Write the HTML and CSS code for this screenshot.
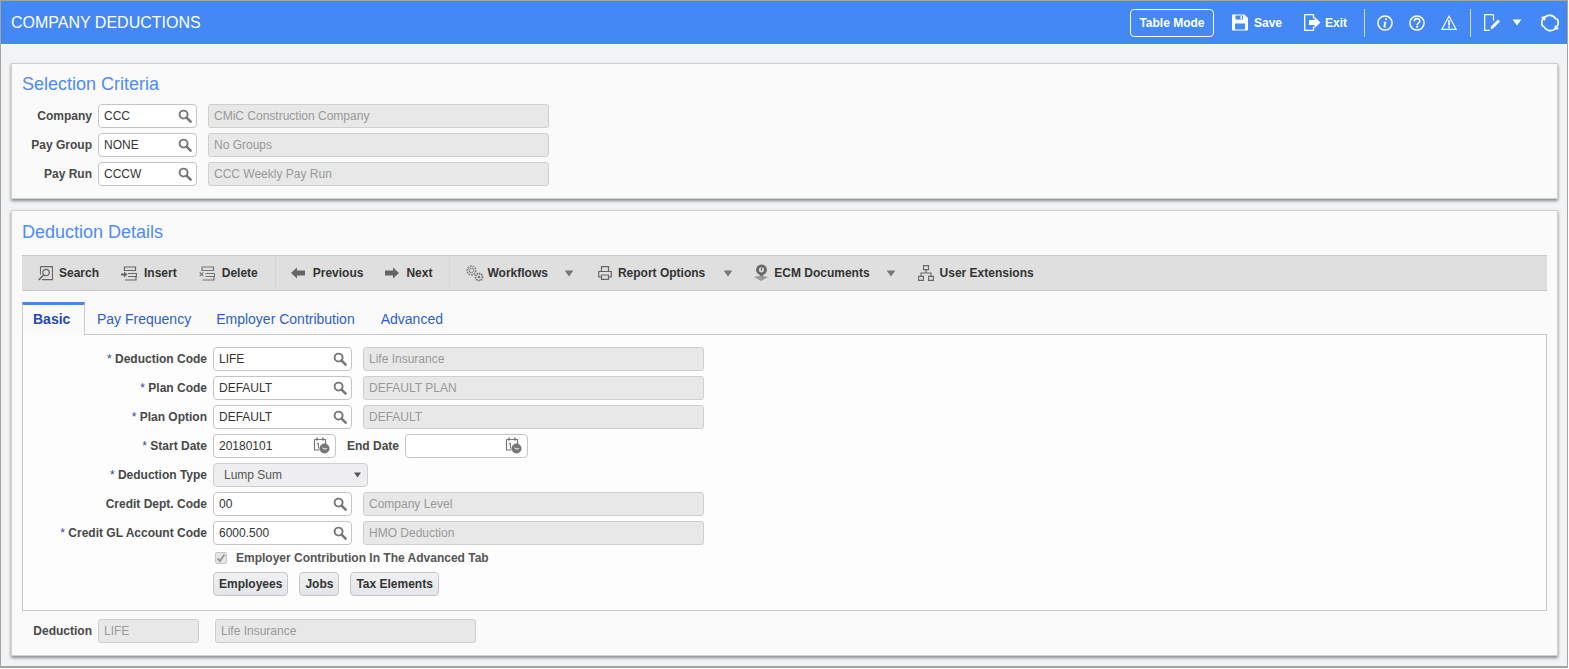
FILE: index.html
```html
<!DOCTYPE html>
<html lang="en">
<head>
<meta charset="utf-8">
<title>Company Deductions</title>
<link rel="stylesheet" href="styles.css">
</head>
<body>
<svg class="defs" width="0" height="0" aria-hidden="true">
  <symbol id="i-lens" viewBox="0 0 14 14"><circle cx="5.6" cy="5.6" r="4" fill="none" stroke="currentColor" stroke-width="1.9"/><path d="M8.6 8.6l4 4" stroke="currentColor" stroke-width="2.6" stroke-linecap="round"/></symbol>
  <symbol id="i-cal" viewBox="0 0 17 17"><path d="M1.5 2.5h11v4.5M1.5 2.5v10.5h5" fill="none" stroke="#777" stroke-width="1.2"/><path d="M4 .5v3M10 .5v3" stroke="#777" stroke-width="1.6"/><path d="M4 6.5h1.4v5" fill="none" stroke="#777" stroke-width="1.1"/><circle cx="11.5" cy="11.5" r="5" fill="#777"/><path d="M9.5 10.8l2.2 1.3 2.2-.6" fill="none" stroke="#fff" stroke-width="1"/></symbol>
  <symbol id="i-caret" viewBox="0 0 10 8"><path d="M0 .5h10L5 7.5z" fill="currentColor"/></symbol>
</svg>
<div class="window">
  <header class="topbar">
    <h1 class="app-title">COMPANY DEDUCTIONS</h1>
    <div class="top-actions">
      <button class="table-mode" type="button">Table Mode</button>
      <span class="top-item save">
        <svg width="16" height="17" viewBox="0 0 16 17"><path d="M0 1.500A1 1 0 0 1 1 .5h11.500L16 4v11.500a1 1 0 0 1-1 1H1a1 1 0 0 1-1-1z" fill="#fff"/><path d="M3.500 1.500h7.500v4H3.500z" fill="#4388f5"/><path d="M8.500 2h1.500v3H8.500z" fill="#fff"/><path d="M3 9.500h10v6H3z" fill="#4388f5"/></svg>
        Save
      </span>
      <span class="top-item exit">
        <svg width="17" height="17" viewBox="0 0 17 17"><path d="M9.500 4.500V.7H.7v15.600h8.800v-3.800" fill="none" stroke="#fff" stroke-width="1.300"/><path d="M5 6h5.500V2.800L16.500 8.500l-6 5.700V11H5z" fill="#fff"/></svg>
        Exit
      </span>
      <span class="top-sep first"></span>
      <svg class="top-icon info" width="16" height="16" viewBox="0 0 16 16"><circle cx="8" cy="8" r="7.100" fill="none" stroke="#fff" stroke-width="1.500"/><path d="M8.300 3.200h1.800l-.3 1.700H8zM6.400 6.700h3l-1.200 5 1.100-.2-.2.900H6.200l1.200-5.300-1.200.2z" fill="#fff"/></svg>
      <svg class="top-icon help" width="16" height="16" viewBox="0 0 16 16"><circle cx="8" cy="8" r="7.100" fill="none" stroke="#fff" stroke-width="1.500"/><path d="M5.300 6.200c0-3.400 5.500-3.400 5.500-.1 0 2.100-2.600 2-2.600 3.800" fill="none" stroke="#fff" stroke-width="1.600"/><path d="M7.200 10.800h2v1.900h-2z" fill="#fff"/></svg>
      <svg class="top-icon warn" width="16" height="15" viewBox="0 0 16 15"><path d="M8 1.300L.9 14.300h14.200z" fill="none" stroke="#fff" stroke-width="1.200"/><path d="M7.200 5h1.600v5.500H7.200zM7.200 11.300h1.600v1.600H7.200z" fill="#fff"/></svg>
      <span class="top-sep second"></span>
      <svg class="top-icon edit" width="16" height="17" viewBox="0 0 16 17"><path d="M9.500.7H.7v15.600h5" fill="none" stroke="#fff" stroke-width="1.200"/><path d="M9.500.7v6" stroke="#fff" stroke-width="1.200"/><path d="M6.500 15.500l.8-3.300L14 5.500l2 2-6.700 6.700z" fill="#fff"/></svg>
      <svg class="top-caret" width="10" height="7"><use href="#i-caret"/></svg>
      <svg class="top-icon refresh" width="18" height="18" viewBox="0 0 18 18"><path d="M15 5.500A7 7 0 0 0 3.500 3.500M3 12.500A7 7 0 0 0 14.500 14.500" fill="none" stroke="#fff" stroke-width="1.700"/><path d="M2.300 4.500A7 7 0 0 0 2.300 13" fill="none" stroke="#fff" stroke-width="1.700"/><path d="M15.700 4.500A7 7 0 0 1 15.700 13" fill="none" stroke="#fff" stroke-width="1.700"/><path d="M0 3l5-1-1 5zM18 15l-5 1 1-5z" fill="#fff"/></svg>
    </div>
  </header>

  <main class="content">
    <section class="panel selection">
      <h2 class="panel-title">Selection Criteria</h2>
      <div class="row top-row">
        <label class="lbl narrow">Company</label>
        <div class="field narrow-f"><span>CCC</span><svg class="lens" width="14" height="14"><use href="#i-lens"/></svg></div>
        <div class="ro wide-s">CMiC Construction Company</div>
      </div>
      <div class="row top-row">
        <label class="lbl narrow">Pay Group</label>
        <div class="field narrow-f"><span>NONE</span><svg class="lens" width="14" height="14"><use href="#i-lens"/></svg></div>
        <div class="ro wide-s">No Groups</div>
      </div>
      <div class="row top-row">
        <label class="lbl narrow">Pay Run</label>
        <div class="field narrow-f"><span>CCCW</span><svg class="lens" width="14" height="14"><use href="#i-lens"/></svg></div>
        <div class="ro wide-s">CCC Weekly Pay Run</div>
      </div>
    </section>

    <section class="panel details">
      <h2 class="panel-title">Deduction Details</h2>
      <nav class="toolbar">
        <span class="tool first-tool">
          <svg width="15" height="15" viewBox="0 0 15 15"><path d="M2.500.6h12v13H4" fill="none" stroke="#666" stroke-width="1.100"/><path d="M2.500.6v8" stroke="#666" stroke-width="1.100"/><circle cx="8" cy="6.500" r="3.200" fill="none" stroke="#666" stroke-width="1.200"/><path d="M5.500 9L.8 14" stroke="#666" stroke-width="1.700"/></svg>
          Search
        </span>
        <span class="tool wide-gap">
          <svg width="16" height="15" viewBox="0 0 16 15"><path d="M3.500 1h11v3.500h-11zM4 4.500h10M7 7.500h8.500v3H7M4 14h11v-3.500" fill="none" stroke="#666" stroke-width="1.200"/><path d="M0 7.500h3V5.500l3.500 3-3.500 3v-2H0z" fill="#666"/></svg>
          Insert
        </span>
        <span class="tool wide-gap">
          <svg width="16" height="15" viewBox="0 0 16 15"><path d="M3 1h11.500v3.500H3zM6.500 7.500h9v3h-9M3.500 14H15v-3.500" fill="none" stroke="#777" stroke-width="1.200"/><path d="M.7 6.500l3.600 3.600M4.300 6.500L.7 10.100" stroke="#777" stroke-width="1.200"/></svg>
          Delete
        </span>
        <span class="tool-sep"></span>
        <span class="tool prev">
          <svg width="14" height="12" viewBox="0 0 14 12"><path d="M0 6l6-5.500V3.500h8v5H6v3z" fill="#666"/></svg>
          Previous
        </span>
        <span class="tool wide-gap">
          <svg width="14" height="12" viewBox="0 0 14 12"><path d="M14 6L8 .5V3.500H0v5h8v3z" fill="#666"/></svg>
          Next
        </span>
        <span class="tool-sep"></span>
        <span class="tool drop gears">
          <svg width="19" height="18" viewBox="0 0 19 18"><circle cx="6.500" cy="6.500" r="4.300" fill="none" stroke="#888" stroke-width="1.800" stroke-dasharray="1.700 .9"/><circle cx="6.500" cy="6.500" r="2.200" fill="none" stroke="#888"/><circle cx="14" cy="13" r="3.500" fill="none" stroke="#777" stroke-width="1.800" stroke-dasharray="1.500 .8"/><circle cx="14" cy="13" r="1.200" fill="#777"/></svg>
          Workflows
        </span>
        <svg class="tool-caret after-flow" width="10" height="7"><use href="#i-caret"/></svg>
        <span class="tool drop report">
          <svg width="14" height="14" viewBox="0 0 14 14"><path d="M3.500 5V.7h7V5M3.500 11H.7V5.500h12.600V11h-2.800" fill="none" stroke="#666" stroke-width="1.200"/><path d="M3.500 9h7v4.300h-7z" fill="none" stroke="#666" stroke-width="1.200"/></svg>
          Report Options
        </span>
        <svg class="tool-caret" width="10" height="7"><use href="#i-caret"/></svg>
        <span class="tool drop ecm">
          <svg width="16" height="18" viewBox="0 0 16 18"><circle cx="8.500" cy="5.800" r="5.400" fill="#666"/><circle cx="8.500" cy="5.800" r="2.600" fill="#ddd"/><path d="M8.500 3.800v3" stroke="#666" stroke-width="1.200"/><path d="M7 11h3v3H7z" fill="#666"/><path d="M1 13l7-1.500 7 1.500-7 4z" fill="#999"/></svg>
          ECM Documents
        </span>
        <svg class="tool-caret" width="10" height="7"><use href="#i-caret"/></svg>
        <span class="tool ext">
          <svg width="16" height="16" viewBox="0 0 16 16"><path d="M5.500.6h5v4h-5zM.6 11.400h4.800v4H.6zM10.600 11.400h4.800v4h-4.800zM8 4.600v3.400M3 11.400V8h10v3.400" fill="none" stroke="#666" stroke-width="1.100"/></svg>
          User Extensions
        </span>
      </nav>

      <div class="tabs">
        <span class="tab active">Basic</span>
        <span class="tab">Pay Frequency</span>
        <span class="tab employer">Employer Contribution</span>
        <span class="tab">Advanced</span>
      </div>

      <div class="tab-body">
        <div class="row d-row">
          <label class="lbl wide"><i>*</i> Deduction Code</label>
          <div class="field wide-f"><span>LIFE</span><svg class="lens" width="14" height="14"><use href="#i-lens"/></svg></div>
          <div class="ro wide-s">Life Insurance</div>
        </div>
        <div class="row d-row">
          <label class="lbl wide"><i>*</i> Plan Code</label>
          <div class="field wide-f"><span>DEFAULT</span><svg class="lens" width="14" height="14"><use href="#i-lens"/></svg></div>
          <div class="ro wide-s">DEFAULT PLAN</div>
        </div>
        <div class="row d-row">
          <label class="lbl wide"><i>*</i> Plan Option</label>
          <div class="field wide-f"><span>DEFAULT</span><svg class="lens" width="14" height="14"><use href="#i-lens"/></svg></div>
          <div class="ro wide-s">DEFAULT</div>
        </div>
        <div class="row d-row">
          <label class="lbl wide"><i>*</i> Start Date</label>
          <div class="field date-f"><span>20180101</span><svg class="cal" width="17" height="17"><use href="#i-cal"/></svg></div>
          <label class="lbl end-lbl">End Date</label>
          <div class="field date-f"><span></span><svg class="cal" width="17" height="17"><use href="#i-cal"/></svg></div>
        </div>
        <div class="row d-row">
          <label class="lbl wide"><i>*</i> Deduction Type</label>
          <div class="select"><span>Lump Sum</span><svg width="7" height="6"><use href="#i-caret"/></svg></div>
        </div>
        <div class="row d-row">
          <label class="lbl wide">Credit Dept. Code</label>
          <div class="field wide-f"><span>00</span><svg class="lens" width="14" height="14"><use href="#i-lens"/></svg></div>
          <div class="ro wide-s">Company Level</div>
        </div>
        <div class="row d-row">
          <label class="lbl wide"><i>*</i> Credit GL Account Code</label>
          <div class="field wide-f"><span>6000.500</span><svg class="lens" width="14" height="14"><use href="#i-lens"/></svg></div>
          <div class="ro wide-s">HMO Deduction</div>
        </div>
        <div class="check-row">
          <span class="check"><svg width="10" height="10" viewBox="0 0 10 10"><path d="M1.500 5.500l2.500 2.500 4.500-6.500" fill="none" stroke="#999" stroke-width="2"/></svg></span>
          <span class="check-text">Employer Contribution In The Advanced Tab</span>
        </div>
        <div class="btn-row">
          <button class="btn" type="button">Employees</button>
          <button class="btn" type="button">Jobs</button>
          <button class="btn" type="button">Tax Elements</button>
        </div>
      </div>

      <div class="row foot-row">
        <label class="lbl narrow">Deduction</label>
        <div class="ro foot-a">LIFE</div>
        <div class="ro foot-b">Life Insurance</div>
      </div>
    </section>
  </main>
</div>
</body>
</html>
```
FILE: styles.css
```css
* { box-sizing: border-box; }
html, body { margin: 0; padding: 0; height: 100%; background: #fff; overflow: hidden; }
body { font-family: "Liberation Sans", Arial, sans-serif; font-size: 12px; color: #333; }
.defs { position: absolute; }

.window { height: 668px; width: 1568px; border: 1px solid #a3a3a3; border-bottom-width: 2px; background: #f2f3f5; }

.topbar { height: 43px; background: #4388f5; color: #fff; display: flex; align-items: center; justify-content: space-between; padding-left: 10px; }
.app-title { margin: 0; font-size: 16px; font-weight: 400; }
.top-actions { display: flex; align-items: center; padding-right: 8px; }
.table-mode { width: 84px; height: 28px; border: 1px solid #fff; border-radius: 4px; background: transparent; color: #fff; font: bold 12px "Liberation Sans", Arial, sans-serif; padding: 0; }
.top-item { display: flex; align-items: center; font-weight: bold; }
.save { margin-left: 18px; gap: 6px; }
.exit { margin-left: 22px; gap: 4px; }
.top-sep { width: 1px; height: 28px; background: #c9dcfb; }
.top-sep.first { margin-left: 17px; }
.top-sep.second { margin-left: 13px; }
.info { margin-left: 12px; }
.help { margin-left: 16px; }
.warn { margin-left: 16px; }
.edit { margin-left: 13px; }
.top-caret { margin-left: 12px; color: #fff; }
.refresh { margin-left: 19px; }

.content { padding: 19px 9px 0 10px; display: flex; flex-direction: column; gap: 11px; }
.panel { background: #fafafa; border: 1px solid #cfcfcf; box-shadow: 0 2px 3px #8a8a8a; padding: 0 10px; width: 1547px; }
.panel.selection { height: 136px; }
.panel.details { height: 446px; }
.panel-title { margin: 0; height: 39px; padding-top: 10px; font-size: 18px; line-height: 20px; font-weight: 400; color: #4f8af5; }
.details .panel-title { padding-top: 11px; }

.row { display: flex; align-items: center; height: 25px; margin-bottom: 4px; }
.lbl { display: block; font-weight: bold; color: #484848; text-align: right; white-space: nowrap; }
.lbl i { font-style: normal; font-weight: 400; color: #3345a8; }
.narrow { width: 70px; margin-right: 6px; }
.wide { width: 184px; margin-right: 6px; }
.end-lbl { margin-left: 11px; margin-right: 6px; }

.field { height: 24px; align-self: flex-end; display: flex; align-items: center; justify-content: space-between; background: #fff; border: 1px solid #c4c4c4; border-radius: 4px; padding: 0 4px 1px 5px; color: #333; }
.narrow-f { width: 99px; }
.wide-f { width: 139px; }
.date-f { width: 123px; padding-right: 5px; }
.lens { color: #777; flex: none; }
.cal { flex: none; }
.ro { height: 24px; align-self: flex-end; display: flex; align-items: center; background: #e8e8e8; border: 1px solid #cfcfcf; border-radius: 3px; padding: 0 5px 1px; color: #999; }
.wide-s { width: 341px; margin-left: 11px; }

.toolbar { height: 36px; background: #dfdfdf; border-top: 1px solid #c6c6c6; border-bottom: 1px solid #c6c6c6; display: flex; align-items: center; margin-top: 5px; font-weight: bold; color: #333; padding-left: 5px; }
.tool { display: flex; align-items: center; gap: 6px; padding: 0 11px; white-space: nowrap; }
.tool.wide-gap { gap: 7px; }
.tool.prev { gap: 8px; }
.tool.gears { gap: 3px; }
.tool.ecm { gap: 5px; margin-left: -3px; }
.tool.drop { padding-right: 16px; }
.tool.report { padding-right: 18px; }
.tool-sep { width: 1px; height: 34px; background: #d6d6d6; margin: 0 4px 0 6px; }
.tool-caret { color: #777; margin-right: 12px; flex: none; }
.tool-caret.after-flow { margin-right: 13px; }
.ext { padding-left: 10px; }

.tabs { display: flex; height: 44px; padding-top: 11px; }
.tab { font-size: 14px; line-height: 34px; padding: 0 13px 0 12px; color: #2d5fc9; }
.tab.employer { padding-right: 14px; }
.tab.active { width: 63px; padding: 0 0 0 10px; font-weight: bold; color: #1f4bb0; background: #fafafa; border: 1px solid #c9ccd4; border-top: 3px solid #4388f5; border-bottom: 0; position: relative; z-index: 1; height: 33px; line-height: 29px; }

.tab-body { height: 277px; margin-top: -1px; background: #fdfdfd; border: 1px solid #c6c6c6; padding-top: 11px; }
.d-row { margin-bottom: 4px; }

.select { width: 155px; height: 24px; align-self: flex-end; display: flex; align-items: center; justify-content: space-between; background: #eeeef0; border: 1px solid #cfcfcf; border-radius: 4px; padding: 0 6px 1px 10px; color: #555; }
.select svg { color: #555; }

.check-row { display: flex; align-items: center; height: 18px; margin-top: 3px; padding-left: 192px; }
.check { width: 12px; height: 12px; display: flex; align-items: center; justify-content: center; background: #e4e4e4; border: 1px solid #c8c8c8; border-radius: 2px; }
.check-text { margin-left: 9px; font-weight: bold; color: #555; }

.btn-row { display: flex; gap: 11px; margin-top: 5px; padding-left: 190px; }
.btn { height: 24px; padding: 0 5px; background: linear-gradient(#f0f1f3, #e3e5e9); border: 1px solid #c4c6ca; border-radius: 4px; font: bold 12px "Liberation Sans", Arial, sans-serif; color: #333; }

.foot-row { margin: 7px 0 0; }
.foot-a { width: 101px; }
.foot-b { width: 261px; margin-left: 16px; }
```
